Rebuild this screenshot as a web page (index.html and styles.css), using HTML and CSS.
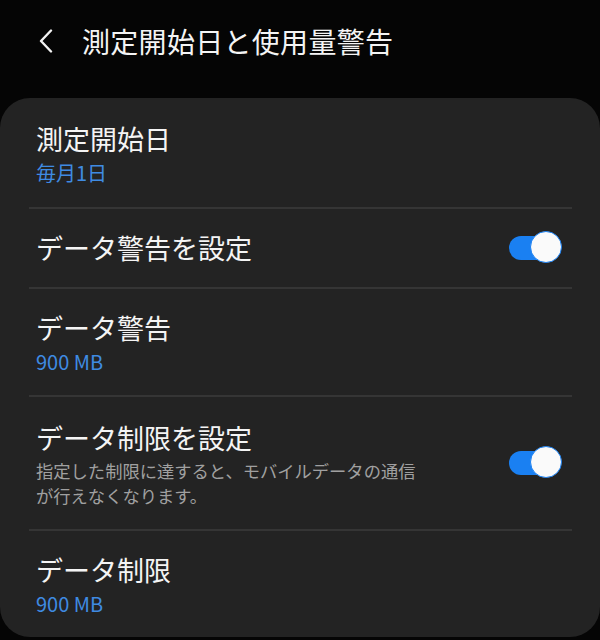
FILE: index.html
```html
<!DOCTYPE html>
<html lang="ja">
<head>
  <meta charset="UTF-8" />
  <meta name="viewport" content="width=device-width,initial-scale=1" />
  <title>測定開始日と使用量警告</title>
  <link rel="stylesheet" href="styles.css">
</head>
<body>
  <header class="appbar">
    <span class="back">
      <svg width="16" height="24" viewBox="0 0 16 24"><path d="M13 1.5 L3 12 L13 22.5" fill="none" stroke="#f2f2f2" stroke-width="2.4" stroke-linecap="round" stroke-linejoin="round"/></svg>
    </span>
    <h1>測定開始日と使用量警告</h1>
  </header>

  <main class="card">
    <div class="row">
      <div class="text">
        <div class="title">測定開始日</div>
        <div class="value">毎月1日</div>
      </div>
    </div>
    <div class="row single">
      <div class="text">
        <div class="title">データ警告を設定</div>
      </div>
      <span class="switch on"></span>
    </div>
    <div class="row">
      <div class="text">
        <div class="title">データ警告</div>
        <div class="value">900 MB</div>
      </div>
    </div>
    <div class="row tall">
      <div class="text">
        <div class="title">データ制限を設定</div>
        <div class="desc">指定した制限に達すると、モバイルデータの通信が行えなくなります。</div>
      </div>
      <span class="switch on"></span>
    </div>
    <div class="row">
      <div class="text">
        <div class="title">データ制限</div>
        <div class="value">900 MB</div>
      </div>
    </div>
  </main>
</body>
</html>
```

FILE: styles.css
```css
body { margin: 0; background: #050505; color: #f4f4f4; font-family: "Noto Sans CJK JP", "Noto Sans", sans-serif; }

.appbar { height: 82px; display: flex; align-items: center; padding-left: 38px; margin-bottom: 16px; }
.back { display: flex; width: 44px; }
.appbar h1 { margin: 0; font-size: 28px; font-weight: 400; letter-spacing: 0.3px; }

.card { background: #232323; border-radius: 30px; padding: 0 28px 0 29px; }
.row { display: flex; align-items: center; padding: 19px 13px 19px 7px; border-top: 2px solid #353535; }
.row:first-child { border-top: none; padding: 21px 13px 20px 7px; }
.row.single { padding-top: 19px; padding-bottom: 20px; }
.row.tall { padding-top: 21px; padding-bottom: 21px; }
.text { flex: 1; }
.title { font-size: 27px; line-height: 39px; }
.value { font-size: 20px; line-height: 29px; color: #3f8be2; }
.desc { font-size: 17.3px; line-height: 25px; color: #a0a0a0; margin-top: 1px; padding-right: 80px; }

.switch { position: relative; width: 50px; height: 24px; border-radius: 12px; background: #1a80f2; flex: none; }
.switch::after { content: ""; position: absolute; right: -3px; top: -5px; width: 30px; height: 30px; border-radius: 50%; background: #fafafa; border: 1.5px solid #1a80f2; }
```
